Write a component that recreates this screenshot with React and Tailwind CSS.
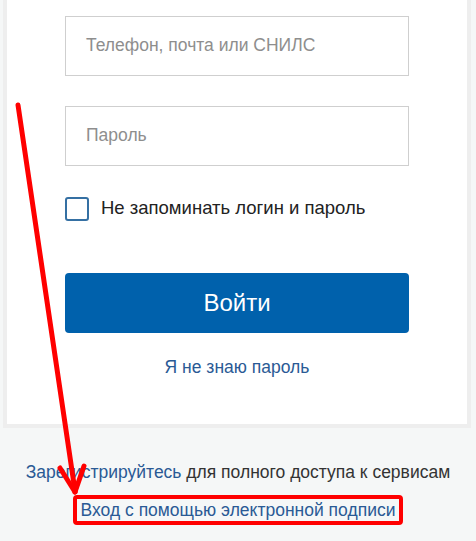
import React from "react";

const font = { fontFamily: '"Liberation Sans", Arial, sans-serif' };

function Field({ placeholder }) {
  return (
    <div className="h-[60px] w-full border border-[#cfcfcf] bg-white flex items-center px-5">
      <span className="text-[17.5px] text-[#8e8e8e] -mt-[2px]">{placeholder}</span>
    </div>
  );
}

export default function App() {
  return (
    <div className="relative w-[476px] h-[541px] overflow-hidden bg-[#f5f7f7]" style={font}>
      {/* Card */}
      <div className="ml-[3px] w-[468px] bg-white border-x-4 border-b-4 border-[#eeeeee] px-[58px] pt-4 pb-[44px]">
        <div className="flex flex-col gap-[30px]">
          <Field placeholder="Телефон, почта или СНИЛС" />
          <Field placeholder="Пароль" />
        </div>

        <label className="mt-[30px] flex items-center gap-3">
          <span className="w-6 h-6 rounded-[3px] border-2 border-[#3570a3] bg-white" />
          <span className="text-[18.5px] text-[#222222] -mt-[2px]">Не запоминать логин и пароль</span>
        </label>

        <button className="mt-[51px] w-full h-[60px] rounded-[4px] bg-[#0061ac] text-white text-[24px]">
          Войти
        </button>

        <div className="mt-[21px] text-center text-[17.5px] text-[#2a5a95]">Я не знаю пароль</div>
      </div>

      {/* Bottom links */}
      <div className="mt-[31px] text-center text-[17.5px] text-[#333333]">
        <span className="text-[#2a5a95]">Зарегистрируйтесь</span> для полного доступа к сервисам
      </div>
      <div className="mt-[10px] flex justify-center">
        <span className="px-[4px] py-[1px] border-4 border-[#ff0000] rounded-[4px] text-[17.5px] text-[#2a5a95] leading-[20px]">
          Вход с помощью электронной подписи
        </span>
      </div>

      {/* Red annotation arrow */}
      <svg className="absolute inset-0 pointer-events-none" width="476" height="541" viewBox="0 0 476 541">
        <g stroke="#ff0000" strokeWidth="5" strokeLinecap="round" fill="none">
          <line x1="18" y1="105" x2="75" y2="491" />
          <line x1="60" y1="468" x2="75" y2="492" />
          <line x1="84" y1="466" x2="75" y2="492" />
        </g>
      </svg>
    </div>
  );
}
